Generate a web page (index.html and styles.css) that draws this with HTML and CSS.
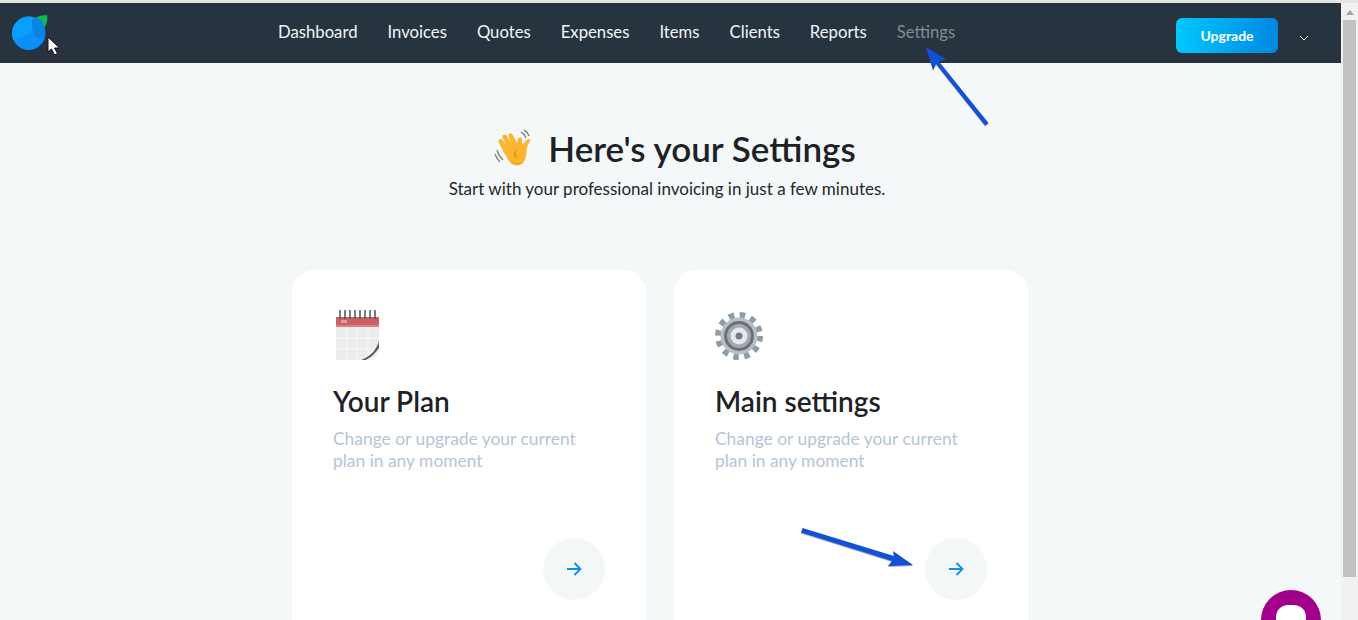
FILE: index.html
```html
<!DOCTYPE html>
<html lang="en">
<head>
<meta charset="utf-8">
<title>Settings</title>
<link rel="stylesheet" href="styles.css">
</head>
<body>
<div class="shell">
  <div class="page">
    <header class="topbar">
      <svg class="logo" width="40" height="40" viewBox="0 0 40 40">
        <path d="M23 6C26 4 31 3 35 3C36 7 35 12 32 16Z" fill="#0dbb55"/>
        <circle cx="16.700" cy="21.300" r="16.700" fill="#0a8efa"/>
        <path d="M0 21.300A16.700 16.700 0 0 1 29 10L31 17L1 28Z" fill="#0a9fff"/>
        <path d="M21 6C24 5 29 7 31.500 11.500C33 15 33.500 20 33 24C31 27 26 27 23 24C20 20 19 11 21 6Z" fill="#0a80e2" opacity=".85"/>
      </svg>
      <nav class="nav">
        <a class="nav-link nav-dashboard">Dashboard</a>
        <a class="nav-link">Invoices</a>
        <a class="nav-link">Quotes</a>
        <a class="nav-link">Expenses</a>
        <a class="nav-link">Items</a>
        <a class="nav-link">Clients</a>
        <a class="nav-link">Reports</a>
        <a class="nav-link nav-link-active">Settings</a>
      </nav>
      <div class="account">
        <button class="upgrade">Upgrade</button>
        <svg class="chevron" width="10" height="6" viewBox="0 0 10 6"><path d="M1 1L5 5L9 1" fill="none" stroke="#e8edf0" stroke-width="1"/></svg>
      </div>
    </header>
    <main class="content">
      <section class="hero">
        <h1 class="hero-title">
          <svg class="wave" width="38" height="38" viewBox="0 0 38 38">
            <path d="M3 21C4 25 6 28 9 31M1 25C2 28 4 31 6 33M27 3C29 4 31 6 32 9M30 1C32 2 34 4 35 7" fill="none" stroke="#7f8a90" stroke-width="1.400"/>
            <path d="M12 27C9 22 6 16 4.500 13C3.500 10.500 7 9 8.500 11L13 17L8.500 8.500C7.500 6 11 4.300 12.500 6.500L17 14L14.500 7C13.500 4.500 17 3 18.500 5.500L23 14L24 10C25 7.500 28 8 28 10.500L28 16L33 10.500C35 9 37 10.500 35.500 13C32 18 33 22 32 27C31 33 27 37 22 36.500C17 36 15 32 12 27Z" fill="#fbb52e"/>
            <path d="M25 19C21 22 21 27 24 30C19 28 18 22 25 19Z" fill="#e98f15"/>
            <path d="M15 30C18 35 24 37 29 34C23 35 19 34 15 30Z" fill="#ef9c1d"/>
          </svg>
          <span>Here's your Settings</span>
        </h1>
        <p class="hero-sub">Start with your professional invoicing in just a few minutes.</p>
      </section>
      <section class="cards">
        <article class="card">
          <svg class="card-icon" width="46" height="50" viewBox="0 0 46 50">
            <defs>
              <linearGradient id="fold" x1="0" y1="0" x2="1" y2="1">
                <stop offset="0" stop-color="#d9d9d9"/>
                <stop offset="1" stop-color="#fdfdfd"/>
              </linearGradient>
            </defs>
            <rect x="1" y="17" width="43" height="33" fill="#ececec"/>
            <path d="M1 28H44M1 39H44M11.500 17V50M22 17V50M33 17V50" stroke="#f8f8f8" stroke-width="1"/>
            <rect x="1" y="7" width="43" height="10" fill="#cd6060"/>
            <rect x="1" y="15" width="43" height="2" fill="#d98484"/>
            <rect x="6" y="10" width="6" height="3" fill="#e59b9b"/>
            <path d="M5 0V9M10 0V9M15 0V9M20 0V9M25 0V9M30 0V9M35 0V9M40 0V9" stroke="#49545f" stroke-width="1.500"/>
            <path d="M44 31C42 37 36 46 24 50H46V31Z" fill="#fff"/>
            <path d="M44 31C42 38 37 46 26 50L31 50C38 47 42 42 44 38Z" fill="#5d5d5d"/>
            <path d="M31 50C37 47 41 42 44 38V42C42 46 39 49 36 50Z" fill="url(#fold)"/>
          </svg>
          <h2 class="card-title">Your Plan</h2>
          <p class="card-text">Change or upgrade your current plan in any moment</p>
          <div class="card-foot">
            <span class="go">
              <svg width="18" height="18" viewBox="0 0 18 18"><path d="M2 9H15M9.500 3L15.500 9L9.500 15" fill="none" stroke="#0a8fe6" stroke-width="1.800"/></svg>
            </span>
          </div>
        </article>
        <article class="card">
          <svg class="card-icon card-icon-gear" width="50" height="50" viewBox="0 0 50 50">
            <circle cx="24" cy="26" r="20.500" fill="none" stroke="#8f9ca8" stroke-width="7" stroke-dasharray="5.370 5.370"/>
            <circle cx="24" cy="26" r="18.500" fill="#b6c0c9"/>
            <circle cx="24" cy="26" r="15" fill="#6a7075"/>
            <circle cx="24" cy="26" r="12" fill="#a3a8ac"/>
            <circle cx="24" cy="26" r="8.500" fill="#e6e9eb"/>
            <circle cx="24" cy="26" r="3.500" fill="#777c80"/>
          </svg>
          <h2 class="card-title">Main settings</h2>
          <p class="card-text">Change or upgrade your current plan in any moment</p>
          <div class="card-foot">
            <span class="go">
              <svg width="18" height="18" viewBox="0 0 18 18"><path d="M2 9H15M9.500 3L15.500 9L9.500 15" fill="none" stroke="#0a8fe6" stroke-width="1.800"/></svg>
            </span>
          </div>
        </article>
      </section>
    </main>
  </div>
  <aside class="scrollbar">
    <span class="scroll-up"></span>
    <span class="scroll-thumb"></span>
  </aside>
</div>
<svg class="pointer" width="14" height="20" viewBox="0 0 14 20"><path d="M1 1V16L4.500 13L7.500 19L10.500 17.500L7.500 12H12.500Z" fill="#fff" stroke="#111" stroke-width="1"/></svg>
<svg class="marker marker-top" width="70" height="90" viewBox="0 0 70 90"><path d="M1 2L21 14L14 16.500L63.500 78L60 80.500L11 19L8 25Z" fill="#1250d8"/></svg>
<svg class="marker marker-bottom" width="116" height="44" viewBox="0 0 116 44"><path d="M1.600 0L93 28L92 23L112 37L87 38L91 33L0 4.500Z" fill="#1250d8"/></svg>
<div class="chat"><span class="chat-hole"></span></div>
</body>
</html>
```
FILE: styles.css
```css
* { box-sizing: border-box; }
html, body { margin: 0; height: 620px; overflow: hidden; }
body { font-family: "Lato", "Liberation Sans", sans-serif; background: #f4f8f9; }
.shell { display: flex; height: 620px; padding-top: 3px; background: #e4e4e4; }
.page { width: 1341px; height: 617px; overflow: hidden; background: #f4f8f9; }
.topbar { display: flex; align-items: center; height: 60px; padding: 0 32px 0 12px; background: #27333e; }
.logo { flex: none; margin-top: -2px; }
.nav { display: flex; gap: 30px; margin: 0 0 3px 226px; }
.nav-link { font-size: 16.700px; color: #f2f5f7; white-space: nowrap; }
.nav-link-active { color: #838c93; }
.account { display: flex; align-items: center; gap: 21px; margin-left: auto; padding-top: 5px; }
.upgrade { width: 102px; height: 35px; border: 0; border-radius: 6px; background: linear-gradient(90deg, #00c8ff, #0088e0); color: #fff; font: 700 14px "Lato", sans-serif; }
.chevron { display: block; margin-top: 4px; }
.content { display: flex; flex-direction: column; }
.hero { display: flex; flex-direction: column; align-items: center; padding: 63px 7px 0 0; }
.hero-title { display: flex; align-items: center; gap: 16px; margin: 0 0 0 16px; height: 44px; font-size: 35px; font-weight: 600; color: #1e2125; }
.wave { display: block; }
.hero-sub { margin: 8px 0 0; font-size: 17px; line-height: 22px; color: #24272b; }
.cards { display: flex; gap: 28px; padding: 70px 0 0 292px; }
.card { display: flex; flex-direction: column; width: 354px; height: 400px; padding: 40px 41px 0; background: #fff; border-radius: 22px; }
.card-icon { display: block; margin-left: 2px; }
.card-icon-gear { margin-left: 0; }
.card-title { margin: 23px 0 0; font-size: 28px; line-height: 36px; font-weight: 600; color: #1e2125; }
.card-text { margin: 9px 0 0; font-size: 17.400px; line-height: 22px; color: #b5c5d6; }
.card-foot { display: flex; justify-content: flex-end; margin-top: 66px; }
.go { display: flex; align-items: center; justify-content: center; width: 62px; height: 62px; border-radius: 50%; background: #f3f7f8; }
.scrollbar { display: flex; flex-direction: column; align-items: center; width: 17px; height: 617px; background: #f1f1f1; }
.scroll-up { width: 0; height: 0; margin-top: 7px; border: 4px solid transparent; border-top: 0; border-bottom: 5px solid #a3a3a3; }
.scroll-thumb { width: 13px; height: 557px; margin-top: 5px; background: #c1c1c1; }
.pointer { position: absolute; left: 47px; top: 36px; }
.marker { position: absolute; filter: drop-shadow(0 1px 0 rgba(60, 60, 60, .45)); }
.marker-top { left: 925px; top: 45px; }
.marker-bottom { left: 801px; top: 528px; }
.chat { position: absolute; left: 1261px; top: 590px; display: flex; justify-content: center; width: 60px; height: 60px; padding-top: 15px; border-radius: 50%; background: #a2008c; }
.chat-hole { width: 30px; height: 30px; border-radius: 12px; background: #fff; }
```
